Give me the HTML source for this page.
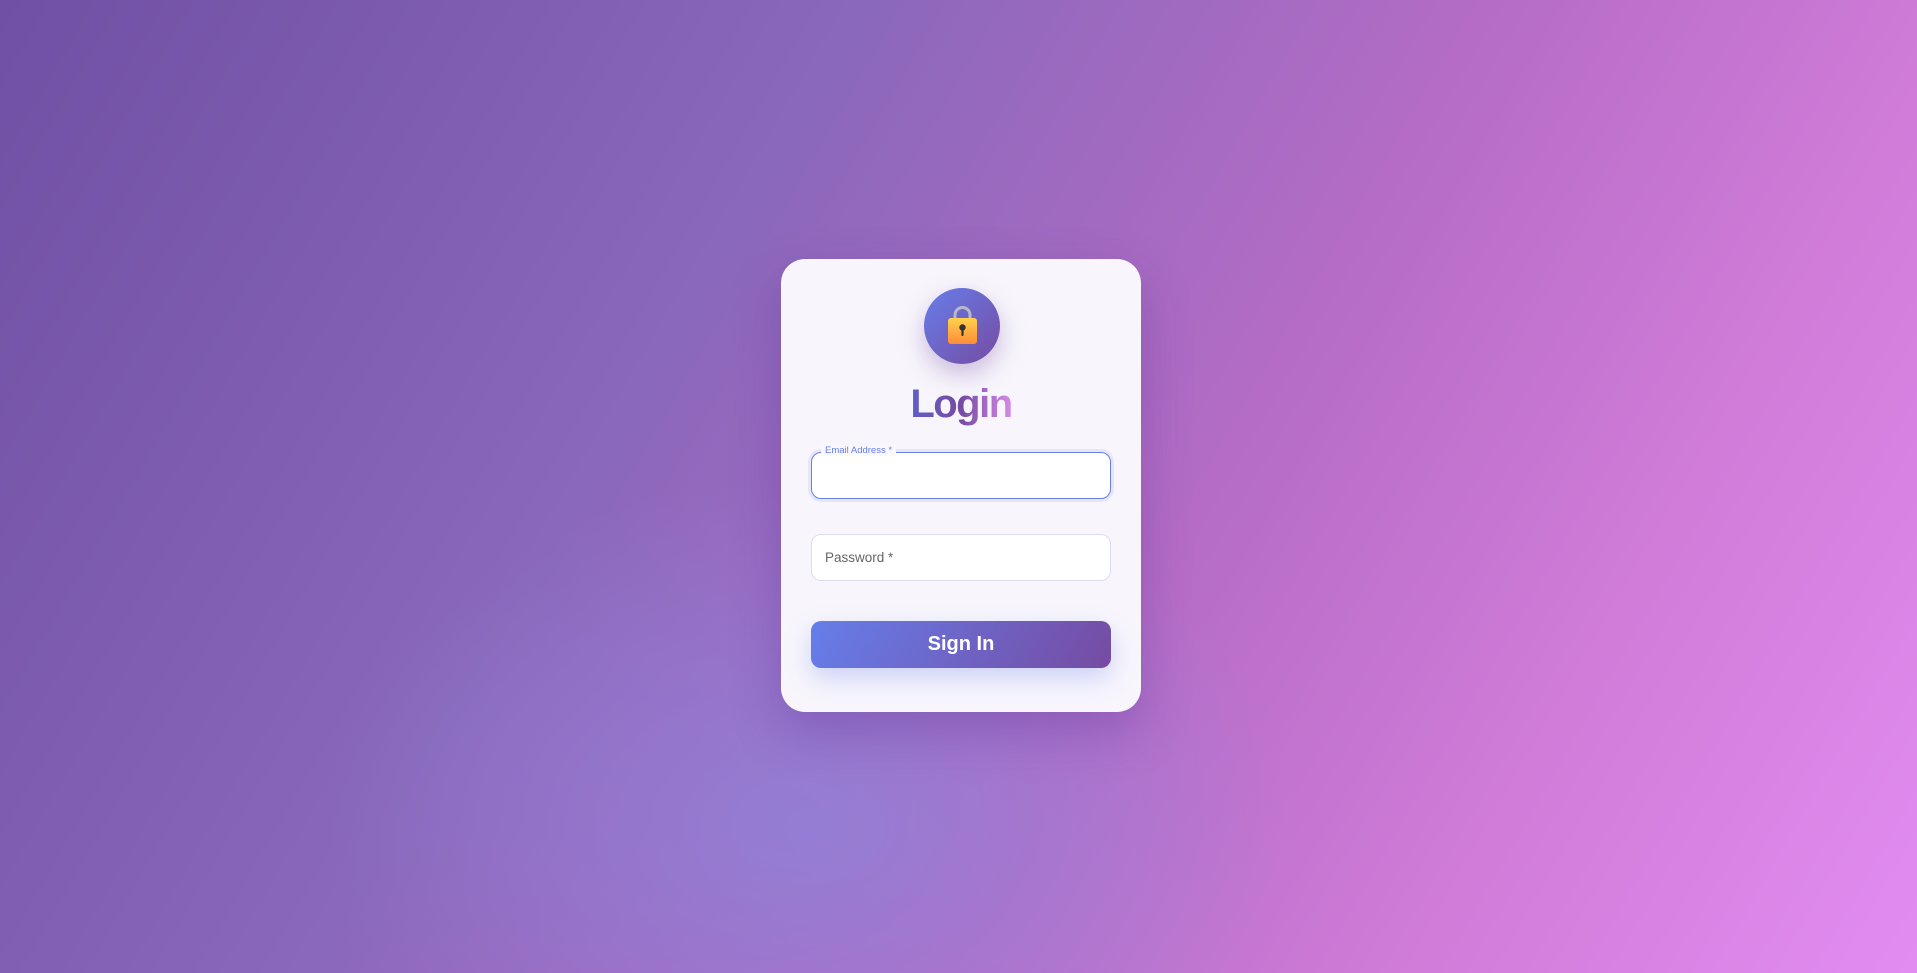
<!DOCTYPE html>
<html><head><style>
*{margin:0;padding:0;box-sizing:border-box}
html,body{width:1917px;height:973px;overflow:hidden}
body{font-family:"Liberation Sans",sans-serif;position:relative;
background:
radial-gradient(ellipse 700px 500px at 42% 85%, rgba(142,132,218,0.75), rgba(142,132,218,0) 70%),
linear-gradient(120deg,#7050a4 0%,#8a68bb 35%,#b46cc6 60%,#d17cd9 80%,#e28cf2 100%);}
.card{position:absolute;left:781px;top:259px;width:360px;height:453px;border-radius:24px;background:#f8f6fc;box-shadow:0 20px 50px rgba(80,40,140,0.3)}
.circle{position:absolute;left:143px;top:29px;width:76px;height:76px;border-radius:50%;background:linear-gradient(135deg,#667eea,#764ba2);box-shadow:0 10px 25px rgba(118,75,162,0.35)}
.title{position:absolute;left:0;width:360px;top:120px;text-align:center;font-size:40px;font-weight:bold;line-height:50px;letter-spacing:-1.5px}
.title span{background:linear-gradient(90deg,#5f5fc8 0%,#764ba2 50%,#d68ae8 100%);-webkit-background-clip:text;background-clip:text;color:transparent}
.f{position:absolute;left:30px;width:300px;height:47px;border-radius:10px;background:#fff}
.e{top:193px;border:1.5px solid #6a7ee6;box-shadow:0 0 0 3px rgba(102,126,234,0.12)}
.p{top:275px;border:1px solid #dcdcf5}
.lab{position:absolute;left:9px;top:-8px;background:#f9f8fd;padding:0 4px;font-size:9.5px;color:#667eea}
.ph{position:absolute;left:13px;top:15px;font-size:13.5px;color:#666}
.btn{position:absolute;left:30px;top:362px;width:300px;height:47px;border-radius:10px;background:linear-gradient(120deg,#667eea,#764ba2);color:#fff;font-weight:bold;font-size:20px;text-align:center;line-height:47px;box-shadow:0 10px 25px rgba(102,126,234,0.3)}
</style></head><body>
<div class="card">
<div class="circle">
<svg width="76" height="76" viewBox="0 0 76 76">
<defs><linearGradient id="g" x1="0" y1="0" x2="0" y2="1"><stop offset="0" stop-color="#ffd24a"/><stop offset="1" stop-color="#ff8c3a"/></linearGradient></defs>
<path d="M31 31 V27 a7.5 7.5 0 0 1 15 0 V31" fill="none" stroke="#b8b8c8" stroke-width="3"/>
<rect x="24" y="30" width="29" height="26" rx="3" fill="url(#g)"/>
<circle cx="38.5" cy="39.5" r="3.2" fill="#333"/><rect x="37.4" y="41" width="2.2" height="7" rx="1" fill="#333"/>
</svg></div>
<div class="title"><span>Login</span></div>
<div class="f e"><div class="lab">Email Address *</div></div>
<div class="f p"><div class="ph">Password *</div></div>
<div class="btn">Sign In</div>
</div>
</body></html>
